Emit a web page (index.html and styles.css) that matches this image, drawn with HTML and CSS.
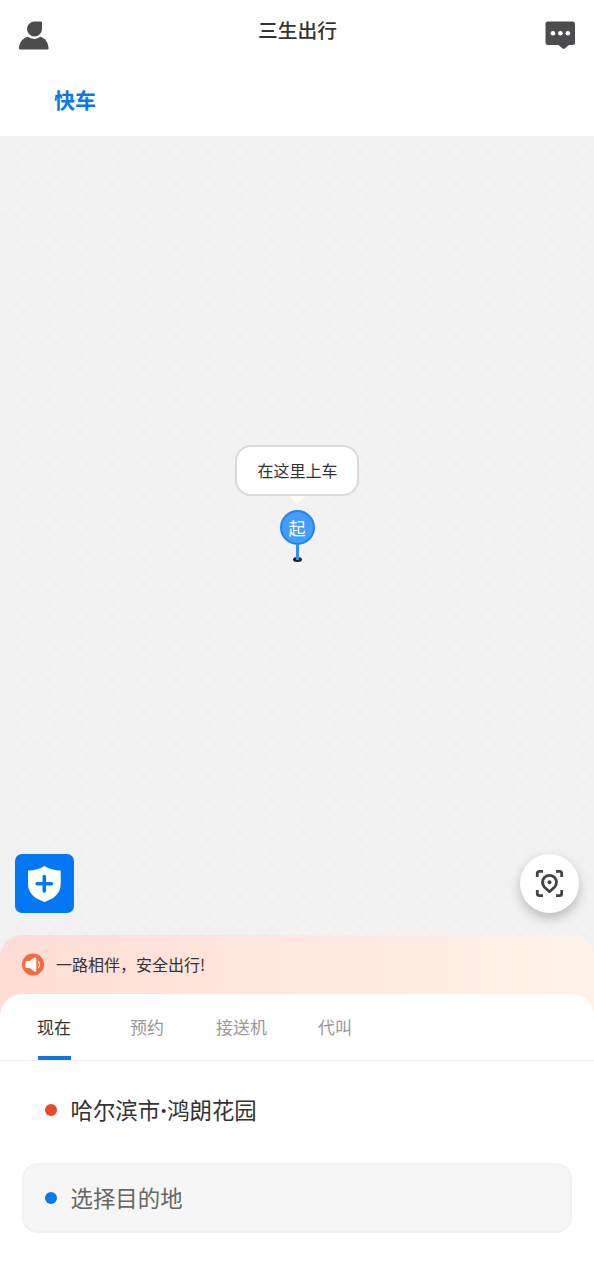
FILE: index.html
```html
<!DOCTYPE html>
<html lang="zh-CN">
<head>
<meta charset="utf-8">
<title>三生出行</title>
<link rel="stylesheet" href="styles.css">
</head>
<body>
<div class="app">
  <header class="header">
    <svg class="header-icon" width="30" height="30" viewBox="0 0 30 30" fill="#4c4c4e">
      <path d="M15.500 1.500H22Q23 1.500 23 2.500V9A7.500 7.500 0 1 1 15.500 1.500Z"/>
      <path d="M0 28.600C0.300 22.500 3.500 18.500 8.500 16.800Q15.500 21 21.500 16.800C26.500 18.500 29.200 22.500 29.600 28.600Q29.600 29.600 28.600 29.600H1Q0 29.600 0 28.600Z"/>
    </svg>
    <h1 class="title">三生出行</h1>
    <svg class="header-icon" width="30" height="30" viewBox="0 0 30 30">
      <path fill="#4c4c4e" d="M3 1.500H27.500Q30 1.500 30 4V22.500Q30 25 27.500 25H24L19.800 28.600Q18.700 29.500 17.600 28.600L13.400 25H3Q0.500 25 0.500 22.500V4Q0.500 1.500 3 1.500Z"/>
      <g fill="#fff"><circle cx="7.900" cy="13.300" r="2.300"/><circle cx="15.400" cy="13.300" r="2.300"/><circle cx="22.900" cy="13.300" r="2.300"/></g>
    </svg>
  </header>
  <nav class="services"><span class="service">快车</span></nav>

  <main class="map">
    <div class="pickup">
      <div class="bubble">在这里上车</div>
      <div class="pin">
        <span class="pin-head">起</span>
        <span class="pin-stem"></span>
      </div>
    </div>
    <div class="map-tools">
      <button class="safety" aria-label="安全">
        <svg width="59" height="59" viewBox="0 0 59 59">
          <path fill="#fff" d="M29.500 12C34 15 39.500 16.300 45.700 16.500V30C45.700 39 39.500 44.500 29.500 48C19.500 44.500 13 39 13 30V16.500C19.500 16.300 25 15 29.500 12Z"/>
          <path stroke="#0378f5" stroke-width="3.600" stroke-linecap="round" d="M22.200 29.800H36.400M29.300 22.600V37"/>
        </svg>
      </button>
      <button class="locate" aria-label="定位">
        <svg width="59" height="59" viewBox="0 0 59 59" fill="none" stroke="#444" stroke-width="2.800">
          <path d="M17.300 23V19.500Q17.300 17.300 19.500 17.300H23M36 17.300H39.500Q41.700 17.300 41.700 19.500V23M41.700 36V39.500Q41.700 41.700 39.500 41.700H36M23 41.700H19.500Q17.300 41.700 17.300 39.500V36"/>
          <path stroke-linejoin="round" d="M29.500 37.800L24.300 33A7 7 0 1 1 34.700 33Z"/>
          <circle cx="29.500" cy="28.300" r="2" fill="#444" stroke="none"/>
        </svg>
      </button>
    </div>
  </main>

  <section class="notice">
    <div class="notice-row">
      <svg width="23" height="23" viewBox="0 0 23 23">
        <circle cx="11" cy="11.500" r="11" fill="#f9693a"/>
        <path fill="#fff" d="M4.500 8H7.500L12.500 4.500Q14.300 3.500 14.300 5.500V17.500Q14.300 19.500 12.500 18.500L7.500 15H4.500Q3.500 15 3.500 14V9Q3.500 8 4.500 8Z"/>
        <path fill="none" stroke="#fff" stroke-width="1.200" stroke-linecap="round" d="M16.400 8.500Q18.600 11.600 16.400 14.700"/>
      </svg>
      <span class="notice-text">一路相伴，安全出行!</span>
    </div>
    <div class="sheet">
      <nav class="tabs">
        <span class="tab tab-active">现在</span>
        <span class="tab">预约</span>
        <span class="tab">接送机</span>
        <span class="tab">代叫</span>
      </nav>
      <div class="place origin"><i class="dot dot-red"></i><span class="place-name">哈尔滨市<span class="separator">·</span>鸿朗花园</span></div>
      <div class="place destination"><i class="dot dot-blue"></i><span class="place-name">选择目的地</span></div>
    </div>
  </section>
</div>
</body>
</html>
```
FILE: styles.css
```css
* { box-sizing: border-box; }
body {
  margin: 0;
  background: #fff;
  color: #333;
  font-family: "Noto Sans CJK SC", sans-serif;
}
svg { display: block; }
button { border: 0; padding: 0; }
.app {
  width: 594px;
  height: 1280px;
  display: flex;
  flex-direction: column;
  overflow: hidden;
}
.header {
  height: 64px;
  padding: 0 19px;
  display: flex;
  justify-content: space-between;
  align-items: flex-start;
}
.header-icon { margin-top: 20px; }
.title {
  margin: 15px 0 0 1px;
  font-size: 19.8px;
  line-height: 30px;
  font-weight: 500;
}
.services {
  height: 72px;
  padding: 19px 54px 0;
  font-size: 21px;
  line-height: 32px;
  font-weight: 700;
  color: #0b78e6;
}
.map {
  flex: none;
  height: 829px;
  margin-bottom: -30px;
  padding-bottom: 30px;
  display: flex;
  flex-direction: column;
  justify-content: space-between;
  background-color: #f3f3f3;
  background-image:
    repeating-linear-gradient(45deg, rgba(0, 0, 0, .004) 0 4px, transparent 4px 9px),
    repeating-linear-gradient(-45deg, rgba(0, 0, 0, .004) 0 4px, transparent 4px 9px);
}
.pickup {
  padding-top: 309px;
  display: flex;
  flex-direction: column;
  align-items: center;
}
.bubble {
  position: relative;
  width: 124px;
  height: 51px;
  padding-left: 1px;
  border: 2px solid #dadada;
  border-radius: 16px;
  background: #fff;
  font-size: 16px;
  line-height: 47px;
  text-align: center;
}
.bubble::after {
  content: "";
  position: absolute;
  left: 52px;
  top: 49px;
  border: 8px solid transparent;
  border-top-color: #fff;
  border-bottom: 0;
}
.pin {
  margin-top: 14px;
  display: flex;
  flex-direction: column;
  align-items: center;
}
.pin-head {
  width: 35px;
  height: 35px;
  border: 2px solid #2583e6;
  border-radius: 50%;
  background: #419ffb;
  color: #fff;
  font-size: 17px;
  line-height: 31px;
  text-align: center;
}
.pin-stem {
  position: relative;
  width: 3px;
  height: 15px;
  background: #2e90f5;
}
.pin-stem::before {
  content: "";
  position: absolute;
  left: -3px;
  top: 12px;
  width: 9px;
  height: 5px;
  border-radius: 50%;
  background: #222;
}
.pin-stem::after {
  content: "";
  position: absolute;
  inset: 0;
  background: #2e90f5;
}
.map-tools {
  padding: 0 15px 22px;
  display: flex;
  justify-content: space-between;
}
.safety {
  width: 59px;
  height: 59px;
  border-radius: 7px;
  background: #0378f5;
}
.locate {
  width: 59px;
  height: 59px;
  border-radius: 50%;
  background: #fff;
  box-shadow: 0 5px 12px rgba(0, 0, 0, .24);
}
.notice {
  position: relative;
  flex: 1;
  border-radius: 22px 22px 0 0;
  background: linear-gradient(90deg, #ffddd6, #fff3e9);
}
.notice-row {
  height: 59px;
  padding: 0 22px;
  display: flex;
  align-items: center;
  gap: 11px;
  font-size: 16px;
}
.notice-text { padding-bottom: 1px; }
.sheet {
  height: 286px;
  border-radius: 22px 22px 0 0;
  background: #fff;
}
.tabs {
  height: 67px;
  padding-left: 37px;
  border-bottom: 1px solid #eee;
  display: flex;
  gap: 51px;
  font-size: 17px;
}
.tab {
  height: 66px;
  line-height: 66px;
  color: #999;
}
.tab-active {
  margin-right: 8px;
  color: #333;
  background: linear-gradient(#0b78e6, #0b78e6) center bottom / 33px 4px no-repeat;
}
.tab:nth-child(3) { margin-left: 1px; }
.place {
  height: 70px;
  margin: 0 22px;
  padding-left: 23px;
  display: flex;
  align-items: center;
  gap: 13.6px;
  font-size: 22.4px;
}
.origin { margin-top: 14px; }
.place-name { padding-bottom: 2px; }
.separator {
  display: inline-block;
  width: 7px;
  font-family: "Noto Sans", sans-serif;
  font-weight: 700;
  line-height: 1;
  text-align: center;
}
.destination {
  margin-top: 18px;
  border: 2px solid #f2f2f2;
  border-radius: 16px;
  padding-left: 21px;
  background: #f6f6f6;
  color: #666;
}
.dot {
  width: 12px;
  height: 12px;
  border-radius: 50%;
}
.dot-red { background: #e9472b; }
.dot-blue { background: #0a78ec; }
```
